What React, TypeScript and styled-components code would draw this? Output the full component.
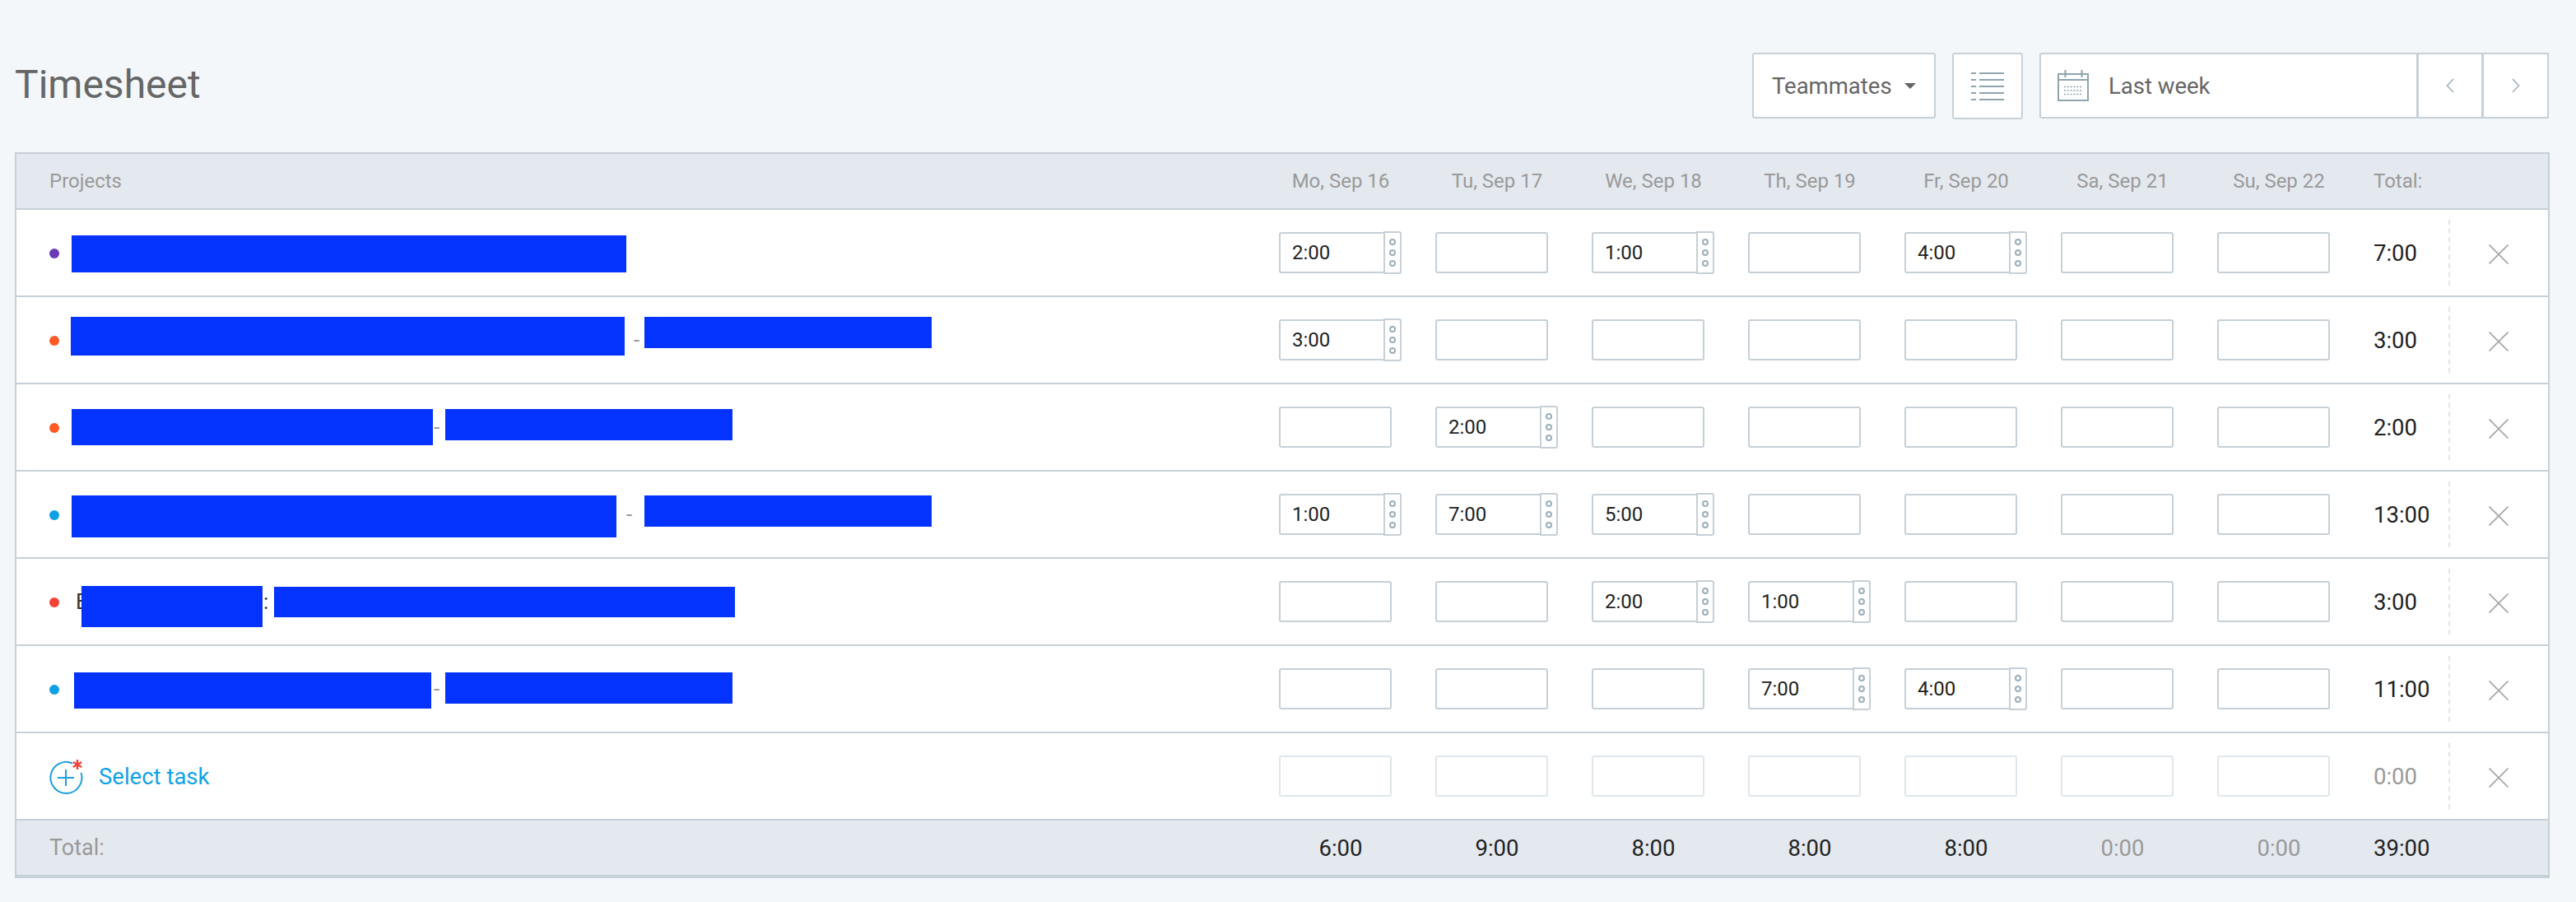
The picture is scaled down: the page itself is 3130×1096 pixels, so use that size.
import styled, { createGlobalStyle } from "styled-components";

const GlobalStyle = createGlobalStyle`
  html, body {
    margin: 0;
    padding: 0;
    background: #f3f7fa;
    font-family: Roboto, "Liberation Sans", sans-serif;
  }
`;

const LINE = "#c6d0d7";

const Page = styled.div`
  width: 3130px;
  height: 1096px;
  overflow: hidden;
  box-sizing: border-box;
  padding-top: 64px;
`;

const Toolbar = styled.div`
  display: flex;
  align-items: flex-start;
  justify-content: space-between;
  height: 81px;
  margin: 0 33px 40px 18px;
`;

const Title = styled.h1`
  margin: 0;
  font-size: 48px;
  font-weight: 400;
  line-height: 78px;
  color: #666;
`;

const Controls = styled.div`
  display: flex;
  align-items: flex-start;
  gap: 20px;
`;

const ControlBox = styled.div<{ $w: number; $h?: number }>`
  box-sizing: border-box;
  display: flex;
  align-items: center;
  width: ${(p) => p.$w}px;
  height: ${(p) => p.$h ?? 80}px;
  background: #fff;
  border: 2px solid ${LINE};
  border-radius: 3px;
  font-size: 27.5px;
  color: #666;
`;

const Teammates = styled(ControlBox)`
  padding-left: 22px;
`;

const Caret = styled.span`
  width: 0;
  height: 0;
  margin-left: 15px;
  border-left: 7px solid transparent;
  border-right: 7px solid transparent;
  border-top: 7px solid #666;
`;

const ListButton = styled(ControlBox)`
  justify-content: center;
`;

const DateGroup = styled.div`
  display: flex;
`;

const DateBox = styled(ControlBox)`
  padding-left: 20px;
  gap: 24px;
`;

const NavButton = styled(ControlBox)`
  justify-content: center;
  margin-left: -1px;
  border-radius: 0;
`;

const Table = styled.div`
  margin: 0 32px 0 18px;
  border: solid ${LINE};
  border-width: 2px 2px 4px;
  background: #fff;
`;

const Grid = styled.div`
  display: grid;
  grid-template-columns: 1534px repeat(7, 190px) 91px 1fr;
`;

const HeadRow = styled(Grid)`
  height: 66px;
  align-items: center;
  background: #e4e9ef;
  border-bottom: 2px solid ${LINE};
  font-size: 24px;
  color: #999;
`;

const FootRow = styled(Grid)`
  height: 66px;
  align-items: center;
  background: #e4e9ef;
`;

const HeadLabel = styled.div`
  padding-left: 40px;
`;

const FootLabel = styled.div`
  padding-left: 40px;
  font-size: 27px;
  color: #999;
`;

const DayLabel = styled.div`
  width: 150px;
  text-align: center;
  white-space: nowrap;
`;

const DayTotal = styled.div<{ $muted?: boolean }>`
  width: 150px;
  text-align: center;
  font-size: 27.5px;
  color: ${(p) => (p.$muted ? "#999" : "#222")};
`;

const RowTotal = styled.div<{ $muted?: boolean }>`
  font-size: 27.5px;
  color: ${(p) => (p.$muted ? "#999" : "#222")};
`;

const Row = styled(Grid)`
  height: 104px;
  align-items: center;
  border-bottom: 2px solid ${LINE};
`;

const NameCell = styled.div`
  display: flex;
  align-items: flex-start;
  height: 104px;
  padding-left: 40px;
`;

const Dot = styled.span<{ $color: string }>`
  flex: none;
  width: 12px;
  height: 12px;
  margin-top: 47px;
  border-radius: 50%;
  background: ${(p) => p.$color};
`;

const Redaction = styled.span<{ $ml: number; $top: number; $w: number; $h: number }>`
  flex: none;
  margin-left: ${(p) => p.$ml}px;
  margin-top: ${(p) => p.$top}px;
  width: ${(p) => p.$w}px;
  height: ${(p) => p.$h}px;
  background: #0433ff;
`;

const NameText = styled.span<{ $ml: number; $w: number; $dark?: boolean }>`
  flex: none;
  margin-left: ${(p) => p.$ml}px;
  width: ${(p) => p.$w}px;
  font-size: 26px;
  line-height: 104px;
  color: ${(p) => (p.$dark ? "#333" : "#999")};
`;

const TimeBox = styled.div`
  display: flex;
  align-items: center;
`;

const Field = styled.div<{ $filled?: boolean; $faint?: boolean }>`
  box-sizing: border-box;
  width: ${(p) => (p.$filled ? 129 : 137)}px;
  height: 50px;
  padding-left: 14px;
  background: #fff;
  border: 2px solid ${(p) => (p.$faint ? "#dfe7ec" : LINE)};
  border-radius: ${(p) => (p.$filled ? "3px 0 0 3px" : "3px")};
  font-size: 24px;
  line-height: 46px;
  color: #222;
`;

const Spinner = styled.div`
  box-sizing: border-box;
  display: flex;
  flex-direction: column;
  align-items: center;
  justify-content: center;
  gap: 5px;
  width: 22px;
  height: 52px;
  margin-left: -2px;
  background: #fff;
  border: 2px solid ${LINE};
  border-radius: 0 3px 3px 0;
`;

const SpinDot = styled.span`
  box-sizing: border-box;
  width: 8px;
  height: 8px;
  border: 2px solid #9cafbb;
  border-radius: 50%;
`;

const RemoveCell = styled.div`
  display: flex;
  align-items: center;
  height: 80px;
  padding-left: 47px;
  border-left: 2px dashed #e2e6e9;
`;

const RemoveIcon = styled.svg`
  display: block;
  margin-top: 4px;
`;

const AddTask = styled.div`
  display: flex;
  align-items: center;
  padding-left: 39px;
  gap: 17px;
  font-size: 27.5px;
  color: #0fa3e6;
`;

const ListIcon = () => (
  <svg width="40" height="34" viewBox="0 0 40 34" fill="none" stroke="#90a4ae" strokeWidth="2">
    {[1, 9, 17, 25, 33].map((y) => (
      <g key={y}>
        <path d={`M0 ${y}h6`} />
        <path d={`M10 ${y}h30`} />
      </g>
    ))}
  </svg>
);

const CalendarIcon = () => (
  <svg width="38" height="38" viewBox="0 0 38 38" fill="none" stroke="#90a4ae" strokeWidth="2">
    <rect x="1" y="5" width="36" height="32" />
    <path d="M1 12h36M9.5 0v9M29.5 0v9" />
    <path d="M8 20.5h23M8 25h23M8 29.5h23" strokeDasharray="2 1.8" strokeWidth="1.6" />
  </svg>
);

const Chevron = ({ dir }: { dir: "left" | "right" }) => (
  <svg width="10" height="18" viewBox="0 0 10 18" fill="none" stroke="#9fb1bd" strokeWidth="1.6">
    <path d={dir === "left" ? "M9 1L1.5 9L9 17" : "M1 1L8.5 9L1 17"} />
  </svg>
);

const CloseIcon = () => (
  <RemoveIcon width="24" height="24" viewBox="0 0 24 24" fill="none" stroke="#a9a9a9" strokeWidth="1.8">
    <path d="M0.5 0.5L23.5 23.5M23.5 0.5L0.5 23.5" />
  </RemoveIcon>
);

const AddIcon = () => (
  <svg width="44" height="44" viewBox="0 0 44 44" fill="none">
    <path
      d="M29 6.5A19 19 0 1 0 39.5 18"
      stroke="#1e9fe0"
      strokeWidth="2"
    />
    <path d="M21 14v20M11 24h20" stroke="#1e9fe0" strokeWidth="2" />
    <path
      d="M35 2v12M29.8 5l10.4 6M40.2 5l-10.4 6"
      stroke="#f44336"
      strokeWidth="2.4"
    />
  </svg>
);

const days = [
  "Mo, Sep 16",
  "Tu, Sep 17",
  "We, Sep 18",
  "Th, Sep 19",
  "Fr, Sep 20",
  "Sa, Sep 21",
  "Su, Sep 22",
];

type Part =
  | { kind: "bar"; ml: number; top: number; w: number; h: number }
  | { kind: "text"; ml: number; w: number; text: string; dark?: boolean };

type RowData = { color: string; parts: Part[]; times: string[]; total: string };

const rows: RowData[] = [
  {
    color: "#6a3bb5",
    parts: [{ kind: "bar", ml: 15, top: 31, w: 674, h: 45 }],
    times: ["2:00", "", "1:00", "", "4:00", "", ""],
    total: "7:00",
  },
  {
    color: "#ff5a26",
    parts: [
      { kind: "bar", ml: 14, top: 24, w: 673, h: 47 },
      { kind: "text", ml: 11, w: 8, text: "-" },
      { kind: "bar", ml: 5, top: 24, w: 349, h: 38 },
    ],
    times: ["3:00", "", "", "", "", "", ""],
    total: "3:00",
  },
  {
    color: "#ff5a26",
    parts: [
      { kind: "bar", ml: 15, top: 30, w: 439, h: 44 },
      { kind: "text", ml: 1, w: 8, text: "-" },
      { kind: "bar", ml: 6, top: 30, w: 349, h: 38 },
    ],
    times: ["", "2:00", "", "", "", "", ""],
    total: "2:00",
  },
  {
    color: "#0ea0e4",
    parts: [
      { kind: "bar", ml: 15, top: 29, w: 662, h: 51 },
      { kind: "text", ml: 12, w: 8, text: "-" },
      { kind: "bar", ml: 14, top: 29, w: 349, h: 38 },
    ],
    times: ["1:00", "7:00", "5:00", "", "", "", ""],
    total: "13:00",
  },
  {
    color: "#f44336",
    parts: [
      { kind: "text", ml: 20, w: 7, text: "E", dark: true },
      { kind: "bar", ml: 0, top: 33, w: 220, h: 50 },
      { kind: "text", ml: 1, w: 13, text: ":", dark: true },
      { kind: "bar", ml: 0, top: 34, w: 560, h: 37 },
    ],
    times: ["", "", "2:00", "1:00", "", "", ""],
    total: "3:00",
  },
  {
    color: "#0ea0e4",
    parts: [
      { kind: "bar", ml: 18, top: 32, w: 434, h: 44 },
      { kind: "text", ml: 3, w: 8, text: "-" },
      { kind: "bar", ml: 6, top: 32, w: 349, h: 38 },
    ],
    times: ["", "", "", "7:00", "4:00", "", ""],
    total: "11:00",
  },
];

const dayTotals = ["6:00", "9:00", "8:00", "8:00", "8:00", "0:00", "0:00"];

const TimeInput = ({ value, faint }: { value?: string; faint?: boolean }) => (
  <TimeBox>
    <Field $filled={!!value} $faint={faint}>
      {value}
    </Field>
    {value && (
      <Spinner>
        <SpinDot />
        <SpinDot />
        <SpinDot />
      </Spinner>
    )}
  </TimeBox>
);

export default function App() {
  return (
    <Page>
      <GlobalStyle />
      <Toolbar>
        <Title>Timesheet</Title>
        <Controls>
          <Teammates $w={223}>
            Teammates
            <Caret />
          </Teammates>
          <ListButton $w={86} $h={81}>
            <ListIcon />
          </ListButton>
          <DateGroup>
            <DateBox $w={460}>
              <CalendarIcon />
              Last week
            </DateBox>
            <NavButton $w={80}>
              <Chevron dir="left" />
            </NavButton>
            <NavButton $w={81}>
              <Chevron dir="right" />
            </NavButton>
          </DateGroup>
        </Controls>
      </Toolbar>

      <Table>
        <HeadRow>
          <HeadLabel>Projects</HeadLabel>
          {days.map((d) => (
            <DayLabel key={d}>{d}</DayLabel>
          ))}
          <div>Total:</div>
          <div />
        </HeadRow>

        {rows.map((row, i) => (
          <Row key={i}>
            <NameCell>
              <Dot $color={row.color} />
              {row.parts.map((part, j) =>
                part.kind === "bar" ? (
                  <Redaction key={j} $ml={part.ml} $top={part.top} $w={part.w} $h={part.h} />
                ) : (
                  <NameText key={j} $ml={part.ml} $w={part.w} $dark={part.dark}>
                    {part.text}
                  </NameText>
                )
              )}
            </NameCell>
            {row.times.map((t, j) => (
              <TimeInput key={j} value={t} />
            ))}
            <RowTotal>{row.total}</RowTotal>
            <RemoveCell>
              <CloseIcon />
            </RemoveCell>
          </Row>
        ))}

        <Row>
          <AddTask>
            <AddIcon />
            Select task
          </AddTask>
          {days.map((d) => (
            <TimeInput key={d} faint />
          ))}
          <RowTotal $muted>0:00</RowTotal>
          <RemoveCell>
            <CloseIcon />
          </RemoveCell>
        </Row>

        <FootRow>
          <FootLabel>Total:</FootLabel>
          {dayTotals.map((t, i) => (
            <DayTotal key={i} $muted={t === "0:00"}>
              {t}
            </DayTotal>
          ))}
          <RowTotal>39:00</RowTotal>
          <div />
        </FootRow>
      </Table>
    </Page>
  );
}
